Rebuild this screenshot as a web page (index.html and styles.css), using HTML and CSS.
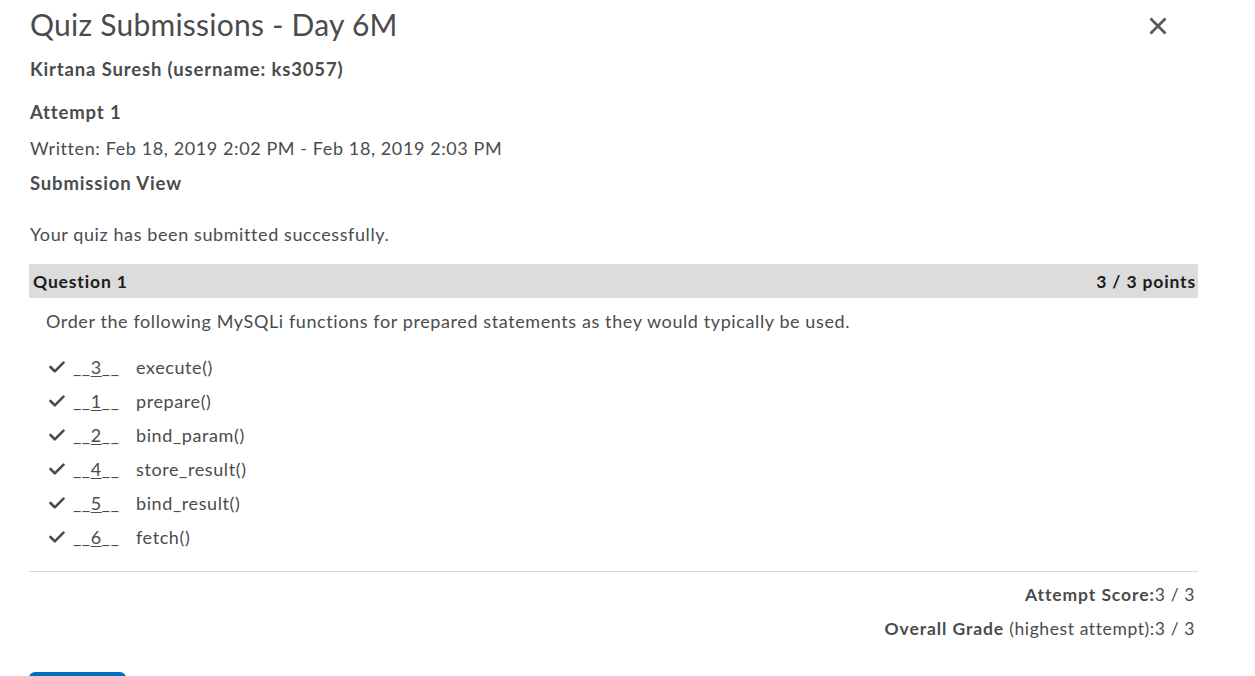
FILE: index.html
```html
<!DOCTYPE html>
<html>
<head>
<meta charset="utf-8">
<link rel="stylesheet" href="styles.css">
</head>
<body>
<div class="page">
  <header class="head">
    <h1 class="title">Quiz Submissions - Day 6M</h1>
    <button class="close" aria-label="Close">
      <svg width="20" height="20" viewBox="0 0 20 20"><path d="M2.5 2.5 L17.5 17.5 M17.5 2.5 L2.5 17.5" stroke="#565a5c" stroke-width="2.8" fill="none"/></svg>
    </button>
  </header>
  <div class="user">Kirtana Suresh (username: ks3057)</div>
  <div class="attempt">Attempt 1</div>
  <div class="written">Written: Feb 18, 2019 2:02 PM - Feb 18, 2019 2:03 PM</div>
  <div class="subview">Submission View</div>
  <div class="success">Your quiz has been submitted successfully.</div>
  <div class="qbar"><span>Question 1</span><span>3 / 3 points</span></div>
  <div class="qtext">Order the following MySQLi functions for prepared statements as they would typically be used.</div>
  <ul class="items">
    <li><svg class="chk" width="16" height="12" viewBox="0 0 16 12"><path d="M1.5 6 L5.8 10.3 L14.5 1.6" stroke="#494c4e" stroke-width="2.6" fill="none" stroke-linecap="round" stroke-linejoin="round"/></svg><span class="ans">__<u>3</u>__</span><span class="fn">execute()</span></li>
    <li><svg class="chk" width="16" height="12" viewBox="0 0 16 12"><path d="M1.5 6 L5.8 10.3 L14.5 1.6" stroke="#494c4e" stroke-width="2.6" fill="none" stroke-linecap="round" stroke-linejoin="round"/></svg><span class="ans">__<u>1</u>__</span><span class="fn">prepare()</span></li>
    <li><svg class="chk" width="16" height="12" viewBox="0 0 16 12"><path d="M1.5 6 L5.8 10.3 L14.5 1.6" stroke="#494c4e" stroke-width="2.6" fill="none" stroke-linecap="round" stroke-linejoin="round"/></svg><span class="ans">__<u>2</u>__</span><span class="fn">bind_param()</span></li>
    <li><svg class="chk" width="16" height="12" viewBox="0 0 16 12"><path d="M1.5 6 L5.8 10.3 L14.5 1.6" stroke="#494c4e" stroke-width="2.6" fill="none" stroke-linecap="round" stroke-linejoin="round"/></svg><span class="ans">__<u>4</u>__</span><span class="fn">store_result()</span></li>
    <li><svg class="chk" width="16" height="12" viewBox="0 0 16 12"><path d="M1.5 6 L5.8 10.3 L14.5 1.6" stroke="#494c4e" stroke-width="2.6" fill="none" stroke-linecap="round" stroke-linejoin="round"/></svg><span class="ans">__<u>5</u>__</span><span class="fn">bind_result()</span></li>
    <li><svg class="chk" width="16" height="12" viewBox="0 0 16 12"><path d="M1.5 6 L5.8 10.3 L14.5 1.6" stroke="#494c4e" stroke-width="2.6" fill="none" stroke-linecap="round" stroke-linejoin="round"/></svg><span class="ans">__<u>6</u>__</span><span class="fn">fetch()</span></li>
  </ul>
  <hr class="rule">
  <div class="score"><b>Attempt Score:</b>3 / 3</div>
  <div class="score score2"><b>Overall Grade</b> (highest attempt):3 / 3</div>
  <div class="btnrow"><button class="done" aria-label="Done"></button></div>
</div>
</body>
</html>
```
FILE: styles.css
```css
html, body {
  margin: 0;
  padding: 0;
  background: #fff;
  overflow: hidden;
  height: 676px;
}
body {
  font-family: Lato, "Open Sans", sans-serif;
  color: #494c4e;
  font-size: 18px;
  letter-spacing: 0.6px;
}
b {
  letter-spacing: 0.9px;
}
.page {
  width: 1169px;
  margin-left: 29px;
}
.head {
  display: flex;
  justify-content: space-between;
  align-items: flex-start;
  padding-top: 6px;
}
.title {
  margin: 0 0 0 1px;
  font-size: 30px;
  font-weight: 400;
  line-height: 36px;
  letter-spacing: 0.25px;
  color: #494c4e;
}
.close {
  border: 0;
  background: none;
  padding: 0;
  margin: 10px 30px 0 0;
  width: 20px;
  height: 20px;
  display: flex;
}
.user,
.attempt,
.subview {
  font-weight: 700;
  font-size: 18.5px;
  letter-spacing: 0.85px;
  line-height: 24px;
  margin-left: 1px;
}
.user {
  margin-top: 15px;
}
.attempt {
  margin-top: 19px;
}
.written {
  margin: 12px 0 0 1px;
  line-height: 24px;
}
.subview {
  margin-top: 11px;
}
.success {
  margin: 27px 0 0 1px;
  line-height: 24px;
}
.qbar {
  margin-top: 18px;
  height: 34px;
  background: #dcdcdc;
  display: flex;
  justify-content: space-between;
  align-items: center;
  padding: 0 2px 0 4px;
  font-size: 17.5px;
  font-weight: 700;
  letter-spacing: 0.85px;
  color: #1b1b1b;
}
.qtext {
  margin: 11px 0 0 17px;
  line-height: 24px;
}
.items {
  list-style: none;
  margin: 17px 0 0 0;
  padding: 0 0 0 20px;
}
.items li {
  height: 34px;
  display: flex;
  align-items: center;
}
.chk {
  margin-right: 8px;
}
.ans {
  width: 63px;
}
.ans u {
  text-underline-offset: 2px;
}
.rule {
  margin: 17px 0 0 0;
  border: 0;
  border-top: 1px solid #d3d9e3;
}
.score {
  margin-top: 11px;
  text-align: right;
  padding-right: 3px;
  font-size: 17.5px;
  line-height: 24px;
}
.score2 {
  margin-top: 10px;
}
.btnrow {
  margin-top: 31px;
  height: 4px;
  overflow: hidden;
}
.done {
  display: block;
  width: 97px;
  height: 36px;
  border: 0;
  border-radius: 6px;
  background: #006fbf;
}
```
